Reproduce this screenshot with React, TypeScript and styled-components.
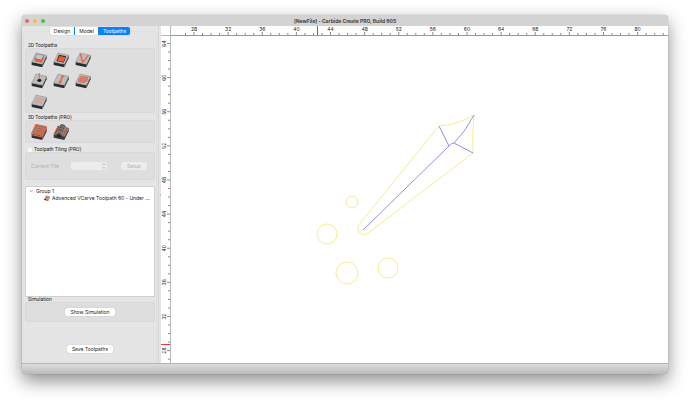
import React from 'react';
import styled, { createGlobalStyle } from 'styled-components';

const GlobalStyle = createGlobalStyle`
  * { box-sizing: border-box; }
  body {
    margin: 0;
    background: #fff;
    color: #1c1c1c;
    font: 5px/6px Inter, "Liberation Sans", sans-serif;
  }
  button, select, input { font: inherit; color: inherit; margin: 0; }
`;

const Desktop = styled.div`
  display: flex;
  min-height: 100vh;
  padding: 15px 22px 29px;
`;

const AppWindow = styled.div`
  flex: 1;
  min-width: 0;
  display: flex;
  flex-direction: column;
  overflow: hidden;
  border-radius: 4px;
  background: #e5e5e5;
  box-shadow: 0 0 1px rgba(0, 0, 0, 0.5), 0 7px 18px rgba(0, 0, 0, 0.45);
`;

const TitleBar = styled.header`
  display: grid;
  grid-template-columns: 1fr auto 1fr;
  align-items: center;
  height: 11px;
  padding: 0 3px;
  background: #d3d3d3;
`;

const Lights = styled.div`
  display: flex;
  gap: 4px;
`;

const Light = styled.span<{ $color: string }>`
  width: 4px;
  height: 4px;
  border-radius: 50%;
  background: ${(p) => p.$color};
`;

const Title = styled.h1`
  margin: 0;
  font-size: 5px;
  line-height: 6px;
  font-weight: 700;
  color: #444;
`;

const Body = styled.div`
  flex: 1;
  display: flex;
  min-height: 0;
`;

const Sidebar = styled.aside`
  flex: none;
  display: flex;
  width: 137px;
  padding: 5px 1px 1px;
  border-right: 1px solid #d6d6d6;
`;

const TabFrame = styled.div`
  flex: 1;
  min-width: 0;
  display: flex;
  flex-direction: column;
  padding: 0 1px 8px;
  border: 1px solid #dfdfdf;
  border-radius: 2px;
`;

const Tabs = styled.nav`
  align-self: center;
  display: flex;
  height: 8px;
  margin: -5px 0 8px;
  border-radius: 2px;
  background: #fff;
  box-shadow: 0 0 1px rgba(0, 0, 0, 0.3);
`;

const Tab = styled.button<{ $active?: boolean }>`
  padding: 0 4px;
  border: 0;
  border-radius: ${(p) => (p.$active ? '0 2px 2px 0' : '0')};
  background: ${(p) => (p.$active ? '#0a80ff' : 'transparent')};
  color: ${(p) => (p.$active ? '#fff' : '#1c1c1c')};
  & + & { border-left: 1px solid ${(p) => (p.$active ? '#0a80ff' : '#e2e2e2')}; }
`;

const Group = styled.fieldset<{ $gap?: number }>`
  margin: 0 0 ${(p) => p.$gap ?? 2}px;
  padding: 0;
  border: 0;
  min-width: 0;
`;

const GroupLabel = styled.legend`
  height: 5px;
  padding: 0 3px;
  font-family: Roboto, sans-serif;
  line-height: 5px;
`;

const CheckLabel = styled.label`
  display: flex;
  align-items: center;
  gap: 2px;
`;

const Check = styled.input`
  appearance: none;
  width: 4px;
  height: 4px;
  border-radius: 1px;
  background: #f8f8f8;
`;

const Panel = styled.div`
  border: 1px solid #d9d9d9;
  border-radius: 2px;
  background: #dedede;
`;

const ToolGrid = styled(Panel)`
  display: grid;
  grid-template-columns: repeat(3, 16px);
  grid-auto-rows: 16px;
  gap: 5px 6px;
  padding: 3px 5px 2px;
`;

const Tool = styled.button`
  display: block;
  padding: 0;
  border: 0;
  background: none;
  svg { display: block; }
`;

const TilingPanel = styled(Panel)`
  display: flex;
  align-items: center;
  height: 28px;
  padding: 0 7px 0 5px;
  color: #b0b0b0;
`;

const TileLabel = styled.label`
  flex: 1;
`;

const TileSelect = styled.div`
  display: flex;
  align-items: center;
  width: 36px;
  height: 8px;
  margin-right: 14px;
  padding-right: 1px;
  border-radius: 2px;
  background: #ececec;
`;

const Select = styled.select`
  appearance: none;
  flex: 1;
  min-width: 0;
  height: 8px;
  padding: 0;
  border: 0;
  background: none;
`;

const PushButton = styled.button`
  min-width: 26px;
  height: 8px;
  padding: 0 5px;
  border: 0;
  border-radius: 2px;
  background: #fff;
  box-shadow: 0 0 1px rgba(0, 0, 0, 0.3);
  &:disabled {
    background: #ececec;
    color: #b0b0b0;
    box-shadow: none;
  }
`;

const Tree = styled.ul`
  flex: 1;
  margin: 0;
  padding: 0 3px;
  list-style: none;
  border: 1px solid #d0d0d0;
  background: #fff;
  white-space: nowrap;
`;

const TreeRow = styled.li<{ $depth: number }>`
  display: flex;
  align-items: center;
  gap: ${(p) => (p.$depth ? 2 : 3)}px;
  height: 7px;
  padding-left: ${(p) => p.$depth * 15}px;
  svg { flex: none; }
`;

const CenterPanel = styled(Panel)`
  display: flex;
  align-items: center;
  justify-content: center;
  height: 20px;
`;

const Footer = styled.div`
  display: flex;
  justify-content: center;
  padding-top: 21px;
`;

const Splitter = styled.div`
  display: flex;
  flex: none;
  justify-content: center;
  width: 2px;
  padding-top: 168px;
  &::after {
    content: '';
    width: 1px;
    height: 2px;
    background: #bcbcbc;
  }
`;

const Workspace = styled.main`
  flex: 1;
  min-width: 0;
  display: grid;
  grid-template: 10px 1fr / 10px 1fr;
  background: #fff;
`;

const Corner = styled.div`
  border-right: 1px solid #b8b8b8;
  border-bottom: 1px solid #b8b8b8;
`;

const HRuler = styled.div`
  min-width: 0;
  border-bottom: 1px solid #999;
`;

const VRuler = styled.div`
  min-height: 0;
  border-right: 1px solid #b8b8b8;
`;

/* Fills its cell without contributing to the cell's own size. */
const Surface = styled.svg`
  display: block;
  width: 100%;
  height: 100%;
  min-height: 0;
  contain: size;
`;

const StatusBar = styled.footer`
  height: 11px;
  border-top: 1px solid #b4b4b4;
  background: linear-gradient(#dcdcdc, #b9b9b9);
`;

type ToolKind = 'contour' | 'pocket' | 'vcarve' | 'drill' | 'engrave' | 'texture' | 'inlay' | 'rough' | 'finish';

function ToolIcon({ kind, size = 16 }: { kind: ToolKind; size?: number }) {
  const flat = kind !== 'rough' && kind !== 'finish';
  return (
    <svg width={size} height={size} viewBox="0 0 48 48" aria-hidden="true">
      {flat && (
        <>
          <path d="M2 30 L34 37 V46 L2 39Z" fill="#252d32" />
          <path d="M34 37 L47 10 V19 L34 46Z" fill="#424a4e" />
          <path d="M15 3 L47 10 L34 37 L2 30Z" fill="#bcbcbc" stroke="#6c6c6c" strokeWidth="1" />
        </>
      )}
      {kind === 'contour' && (
        <>
          <path d="M11 18 L11 28 L32 32 L39 18 V9 L31 22Z" fill="#ee5c37" />
          <path d="M19 6 L39 10 L31 24 L11 19Z" fill="#c6c6c6" stroke="#4c4c4c" />
        </>
      )}
      {kind === 'pocket' && (
        <>
          <path d="M18 8 L40 13 L32 32 L10 27Z" fill="#4b2922" />
          <path d="M20 12 L37 16 L31 30 L13 26Z" fill="#f05a32" />
        </>
      )}
      {kind === 'vcarve' && (
        <path d="M16 6 L23 31 L40 10" fill="none" stroke="#ef603d" strokeWidth="4" />
      )}
      {kind === 'drill' && (
        <>
          <ellipse cx="25" cy="22" rx="6" ry="5" fill="#171b1d" />
          <path d="M25 0 V19" stroke="#ef603d" strokeWidth="3" />
        </>
      )}
      {kind === 'engrave' && (
        <>
          <path d="M29 10 L22 27" stroke="#f25a32" strokeWidth="4" />
          <circle cx="29" cy="10" r="3.5" fill="#f25a32" />
          <path d="M16 24 L28 27 L20 32Z" fill="#f25a32" />
        </>
      )}
      {kind === 'texture' && (
        <>
          <path d="M18 8 L40 11 L38 23 L27 31 L9 27 L11 17Z" fill="#dd765f" />
          <path d="M16 12 L38 17 M13 17 L35 22 M11 22 L31 27" stroke="#c9907f" strokeWidth="1.5" />
        </>
      )}
      {kind === 'inlay' && (
        <>
          <path d="M18 8 L39 13 L31 31 L10 26Z" fill="#d6aca2" />
          <path d="M16 12 L37 17 M14 17 L34 22 M12 22 L32 27" stroke="#c98f82" strokeWidth="1" />
        </>
      )}
      {kind === 'rough' && (
        <>
          <path d="M2 26 L34 33 L34 48 L2 41Z" fill="#2a3237" />
          <path d="M34 33 L47 8 V23 L34 48Z" fill="#454c50" />
          <path d="M14 1 L47 8 L34 35 L2 28Z" fill="#85766f" stroke="#ed6b49" strokeWidth="3" />
          <path d="M12 8 L43 14 M9 15 L40 21 M5 22 L37 28 M2 32 L34 39" stroke="#ed6b49" strokeWidth="3" />
          <path d="M22 4 L12 29 M38 8 L26 32" stroke="#ed6b49" strokeWidth="2" />
          <path d="M34 37 L46 13" stroke="#ed6b49" strokeWidth="2" />
        </>
      )}
      {kind === 'finish' && (
        <>
          <path d="M2 30 L15 5 L47 12 V22 L34 48 L2 41Z" fill="#384046" />
          <path d="M2 31 L9 27 L14 20 L21 3 L28 0 L36 4 L41 11 L47 13 L34 38 L27 36 L23 29 L15 27 L9 33Z" fill="#7c7673" />
          <path d="M3 31 L15 7 M10 29 L21 4 M34 37 L46 14 M27 33 L39 9" stroke="#ed6b49" strokeWidth="3" />
          <path d="M21 6 L28 2 L36 7 M18 13 L25 9 L33 14 M14 20 L21 16 L30 22" fill="none" stroke="#363b3f" strokeWidth="2" />
          <path d="M10 38 Q16 24 26 41Z" fill="#20272b" />
        </>
      )}
    </svg>
  );
}

const STEP = 8.53;
const FIRST = 28;
const LAST_X = 80;
const TOP_Y = 64;
const horizontalTicks = Array.from({ length: LAST_X - FIRST + 5 }, (_, i) => FIRST - 1 + i);
const verticalTicks = Array.from({ length: TOP_Y - FIRST + 2 }, (_, i) => TOP_Y - i);

function HorizontalScale() {
  return (
    <Surface>
      {horizontalTicks.map((value, i) => {
        const x = 14.5 + i * STEP;
        const major = value % 4 === 0;
        return (
          <g key={value}>
            <path d={`M${x} 10 V${major ? 6 : 7}`} stroke="#8a8a8a" />
            {major && value <= LAST_X && (
              <text x={x} y="5" fontSize="5" textAnchor="middle" fill="#222">
                {value}
              </text>
            )}
          </g>
        );
      })}
      <rect x="146" width="1" height="10" fill="#ff2d2d" />
    </Surface>
  );
}

function VerticalScale() {
  return (
    <Surface>
      {verticalTicks.map((value, i) => {
        const y = 7.5 + i * STEP;
        const major = value % 4 === 0;
        return (
          <g key={value}>
            <path d={`M10 ${y} H${major ? 6 : 7}`} stroke="#8a8a8a" />
            {major && (
              <text transform={`translate(5 ${y}) rotate(-90)`} fontSize="5" textAnchor="middle" fill="#222">
                {value}
              </text>
            )}
          </g>
        );
      })}
      <rect y="308" width="10" height="1" fill="#ff2d2d" />
    </Surface>
  );
}

function Drawing() {
  return (
    <Surface fill="none">
      <g stroke="#f5ed90">
        <path d="M268 90 Q286 89 303 79 Q301 98 302 117 L197 197 Q192 201 188 196 Q185 192 190 186Z" />
        <circle cx="156" cy="198" r="10" />
        <circle cx="181" cy="166" r="6" />
        <circle cx="176" cy="237" r="11" />
        <circle cx="217" cy="232" r="10" />
      </g>
      <g stroke="#9090f2">
        <path d="M192 194 L278 110 Q280 107 283 107 Q295 95 303 79" />
        <path d="M268 90 L278 110 M283 107 L302 117" />
      </g>
    </Surface>
  );
}

const tools2d: [ToolKind, string][] = [
  ['contour', 'Contour'],
  ['pocket', 'Pocket'],
  ['vcarve', 'VCarve'],
  ['drill', 'Drill'],
  ['engrave', 'Engrave'],
  ['texture', 'Texture'],
  ['inlay', 'Inlay'],
];
const tools3d: [ToolKind, string][] = [
  ['rough', '3D Rough'],
  ['finish', '3D Finish'],
];

function ToolPalette({ label, tools, gap }: { label: string; tools: [ToolKind, string][]; gap?: number }) {
  return (
    <Group $gap={gap}>
      <GroupLabel>{label}</GroupLabel>
      <ToolGrid>
        {tools.map(([kind, name]) => (
          <Tool key={kind} aria-label={name}>
            <ToolIcon kind={kind} />
          </Tool>
        ))}
      </ToolGrid>
    </Group>
  );
}

export default function App() {
  return (
    <>
      <GlobalStyle />
      <Desktop>
        <AppWindow>
          <TitleBar>
            <Lights>
              <Light $color="#f9605a" />
              <Light $color="#f8bd3c" />
              <Light $color="#3fc54b" />
            </Lights>
            <Title>[NewFile] - Carbide Create PRO, Build 805</Title>
          </TitleBar>
          <Body>
            <Sidebar>
              <TabFrame>
                <Tabs>
                  <Tab>Design</Tab>
                  <Tab>Model</Tab>
                  <Tab $active>Toolpaths</Tab>
                </Tabs>
                <ToolPalette label="2D Toolpaths" tools={tools2d} />
                <ToolPalette label="3D Toolpaths (PRO)" tools={tools3d} gap={4} />
                <Group $gap={6}>
                  <GroupLabel>
                    <CheckLabel>
                      <Check type="checkbox" />
                      Toolpath Tiling (PRO)
                    </CheckLabel>
                  </GroupLabel>
                  <TilingPanel>
                    <TileLabel htmlFor="tile">Current Tile</TileLabel>
                    <TileSelect>
                      <Select id="tile" disabled />
                      <svg width="4" height="6" viewBox="0 0 8 12" fill="none" stroke="#a5a5a5" strokeWidth="1.5" aria-hidden="true">
                        <path d="M1 4 L4 1 L7 4 M1 8 L4 11 L7 8" />
                      </svg>
                    </TileSelect>
                    <PushButton disabled>Setup</PushButton>
                  </TilingPanel>
                </Group>
                <Tree>
                  <TreeRow $depth={0}>
                    <svg width="4" height="4" viewBox="0 0 8 8" fill="none" stroke="#888" aria-hidden="true">
                      <path d="M1 2 L4 6 L7 2" />
                    </svg>
                    Group 1
                  </TreeRow>
                  <TreeRow $depth={1}>
                    <ToolIcon kind="texture" size={6} />
                    Advanced VCarve Toolpath 60 - Under ...
                  </TreeRow>
                </Tree>
                <Group>
                  <GroupLabel>Simulation</GroupLabel>
                  <CenterPanel>
                    <PushButton>Show Simulation</PushButton>
                  </CenterPanel>
                </Group>
                <Footer>
                  <PushButton>Save Toolpaths</PushButton>
                </Footer>
              </TabFrame>
            </Sidebar>
            <Splitter />
            <Workspace>
              <Corner />
              <HRuler>
                <HorizontalScale />
              </HRuler>
              <VRuler>
                <VerticalScale />
              </VRuler>
              <Drawing />
            </Workspace>
          </Body>
          <StatusBar />
        </AppWindow>
      </Desktop>
    </>
  );
}
